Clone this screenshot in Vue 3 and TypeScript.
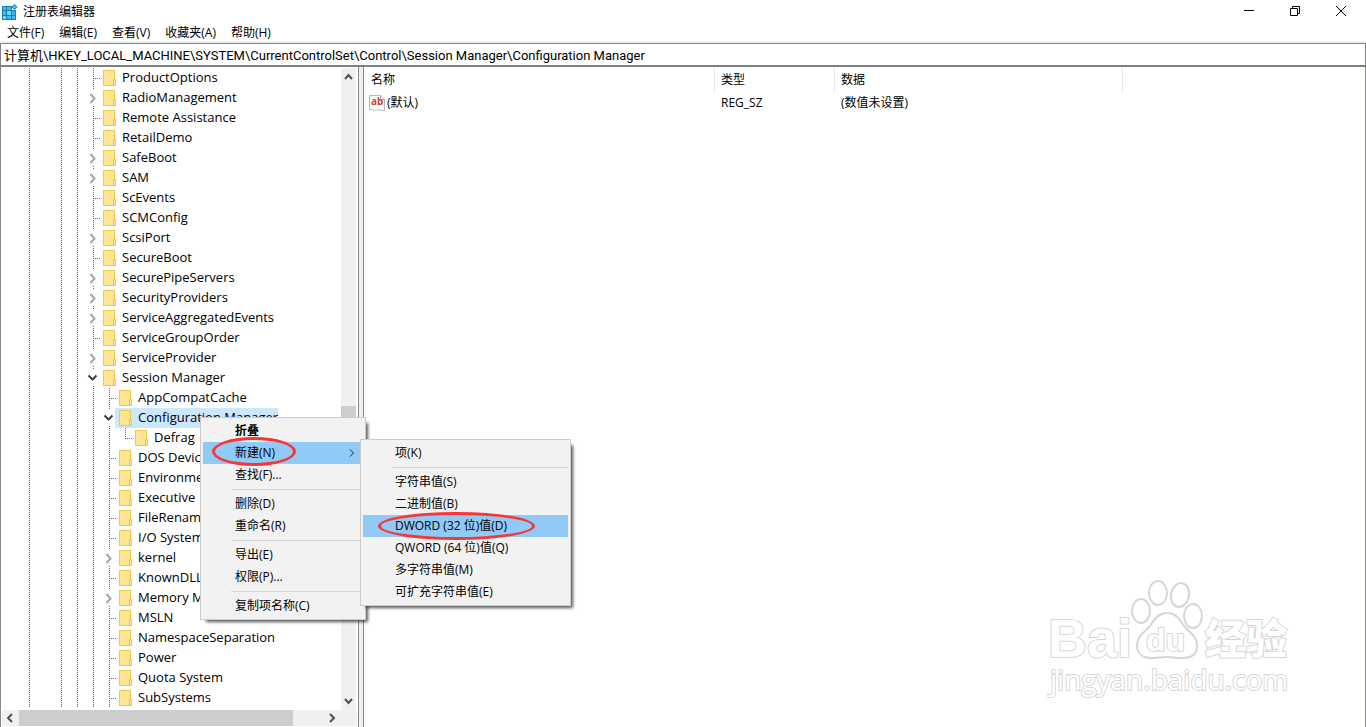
<script setup lang="ts">
import { ref } from 'vue'

type Guide = 'line' | 'blank' | 'tee' | 'end' | 'closed' | 'open'

interface TreeNode {
  name: string
  depth: number
  state?: 'closed' | 'open'
  last?: boolean
}

interface MenuEntry {
  label?: string
  separator?: boolean
  bold?: boolean
  active?: boolean
  submenu?: boolean
}

const path = ref(
  '计算机\\HKEY_LOCAL_MACHINE\\SYSTEM\\CurrentControlSet\\Control\\Session Manager\\Configuration Manager',
)
const selected = ref('Configuration Manager')

const menus = ['文件(F)', '编辑(E)', '查看(V)', '收藏夹(A)', '帮助(H)']

const nodes: TreeNode[] = [
  { name: 'ProductOptions', depth: 0 },
  { name: 'RadioManagement', depth: 0, state: 'closed' },
  { name: 'Remote Assistance', depth: 0 },
  { name: 'RetailDemo', depth: 0 },
  { name: 'SafeBoot', depth: 0, state: 'closed' },
  { name: 'SAM', depth: 0, state: 'closed' },
  { name: 'ScEvents', depth: 0 },
  { name: 'SCMConfig', depth: 0 },
  { name: 'ScsiPort', depth: 0, state: 'closed' },
  { name: 'SecureBoot', depth: 0 },
  { name: 'SecurePipeServers', depth: 0, state: 'closed' },
  { name: 'SecurityProviders', depth: 0, state: 'closed' },
  { name: 'ServiceAggregatedEvents', depth: 0, state: 'closed' },
  { name: 'ServiceGroupOrder', depth: 0 },
  { name: 'ServiceProvider', depth: 0, state: 'closed' },
  { name: 'Session Manager', depth: 0, state: 'open' },
  { name: 'AppCompatCache', depth: 1 },
  { name: 'Configuration Manager', depth: 1, state: 'open' },
  { name: 'Defrag', depth: 2, last: true },
  { name: 'DOS Devices', depth: 1 },
  { name: 'Environment', depth: 1 },
  { name: 'Executive', depth: 1 },
  { name: 'FileRenameOperations', depth: 1 },
  { name: 'I/O System', depth: 1 },
  { name: 'kernel', depth: 1, state: 'closed' },
  { name: 'KnownDLLs', depth: 1 },
  { name: 'Memory Management', depth: 1, state: 'closed' },
  { name: 'MSLN', depth: 1 },
  { name: 'NamespaceSeparation', depth: 1 },
  { name: 'Power', depth: 1 },
  { name: 'Quota System', depth: 1 },
  { name: 'SubSystems', depth: 1 },
]

function guides(node: TreeNode): Guide[] {
  const cells: Guide[] = ['line', 'blank', 'line', 'line']
  for (let i = 0; i < node.depth; i++) cells.push('line')
  cells.push(node.state ?? (node.last ? 'end' : 'tee'))
  return cells
}

const contextMenu: MenuEntry[] = [
  { label: '折叠', bold: true },
  { label: '新建(N)', active: true, submenu: true },
  { label: '查找(F)...' },
  { separator: true },
  { label: '删除(D)' },
  { label: '重命名(R)' },
  { separator: true },
  { label: '导出(E)' },
  { label: '权限(P)...' },
  { separator: true },
  { label: '复制项名称(C)' },
]

const newMenu: MenuEntry[] = [
  { label: '项(K)' },
  { separator: true },
  { label: '字符串值(S)' },
  { label: '二进制值(B)' },
  { label: 'DWORD (32 位)值(D)', active: true },
  { label: 'QWORD (64 位)值(Q)' },
  { label: '多字符串值(M)' },
  { label: '可扩充字符串值(E)' },
]
</script>

<template>
  <div class="window">
    <header class="titlebar">
      <svg class="app-icon" width="16" height="16" viewBox="0 0 16 16" aria-hidden="true">
        <path d="M0 2h10v4h4v10H0z" fill="#1b7fb0" />
        <path d="M1 3h3v3H1zM5 3h4v3H5zM1 7h3v4H1zM5 7h4v4H5zM10 7h3v4h-3zM1 12h3v3H1zM5 12h4v3H5zM10 12h3v3h-3z" fill="#3db8ea" />
        <path d="M5 7h4v4H5zM1 12h3v3H1z" fill="#75d5f5" />
        <path d="M12.500 0l3 3-3 3-3-3z" fill="#1787bd" />
        <path d="M12.500 1.500l1.500 1.500-1.500 1.500-1.500-1.500z" fill="#7bd3f2" />
      </svg>
      <h1 class="title">注册表编辑器</h1>
      <div class="window-buttons">
        <button type="button" aria-label="最小化">
          <svg width="10" height="10" viewBox="0 0 10 10"><path d="M0 4.500h10" /></svg>
        </button>
        <button type="button" aria-label="还原">
          <svg width="10" height="10" viewBox="0 0 10 10"><path d="M.5 2.500h7v7h-7zM2.500 2.500v-2h7v7h-2" /></svg>
        </button>
        <button type="button" aria-label="关闭">
          <svg width="10" height="10" viewBox="0 0 10 10"><path d="M0 0l10 10M10 0L0 10" /></svg>
        </button>
      </div>
    </header>

    <nav class="menubar">
      <button v-for="m in menus" :key="m" type="button">{{ m }}</button>
    </nav>

    <div class="address">
      <input v-model="path" type="text" aria-label="地址" />
    </div>

    <main class="panes">
      <section class="tree-pane">
        <div class="tree-main">
          <ul class="tree">
            <li v-for="node in nodes" :key="node.name" class="row">
              <template v-for="(g, i) in guides(node)" :key="i">
                <button
                  v-if="g === 'closed' || g === 'open'"
                  type="button"
                  class="cell expander"
                  :class="g"
                  :aria-label="(g === 'open' ? '折叠 ' : '展开 ') + node.name"
                >
                  <svg width="16" height="20" viewBox="0 0 16 20">
                    <path v-if="g === 'closed'" d="M5.500 6l4 4.500-4 4.500" />
                    <path v-else d="M3.500 7.500l4 4 4-4" />
                  </svg>
                </button>
                <span v-else class="cell" :class="g"></span>
              </template>
              <button
                type="button"
                class="node"
                :class="{ selected: node.name === selected }"
                @click="selected = node.name"
              >
                <svg width="13" height="16" viewBox="0 0 13 16" aria-hidden="true">
                  <rect x=".5" y=".5" width="11" height="15" fill="#ffe592" stroke="#f0c94c" />
                  <path d="M10.500 9.500h2v6h-2z" fill="#ffe592" stroke="#ecc443" />
                </svg>
                <span>{{ node.name }}</span>
              </button>
            </li>
          </ul>
          <div class="vscroll">
            <svg class="arrow" width="15" height="17" viewBox="0 0 15 17"><path d="M4 11l3.500-4 3.500 4" /></svg>
            <div class="track">
              <span class="before"></span>
              <span class="thumb"></span>
              <span class="after"></span>
            </div>
            <svg class="arrow" width="15" height="17" viewBox="0 0 15 17"><path d="M4 6l3.500 4L11 6" /></svg>
          </div>
        </div>
        <div class="hscroll">
          <svg class="arrow" width="17" height="16" viewBox="0 0 17 16"><path d="M10 4L6 8l4 4" /></svg>
          <div class="track">
            <span class="thumb"></span>
            <span class="after"></span>
          </div>
          <svg class="arrow" width="17" height="16" viewBox="0 0 17 16"><path d="M7 4l4 4-4 4" /></svg>
          <span class="corner"></span>
        </div>
      </section>

      <section class="list-pane">
        <table>
          <thead>
            <tr>
              <th class="c-name">名称</th>
              <th class="c-type">类型</th>
              <th class="c-data">数据</th>
              <th></th>
            </tr>
          </thead>
          <tbody>
            <tr>
              <td class="value">
                <svg width="16" height="16" viewBox="0 0 16 16" aria-hidden="true">
                  <path d="M.5.5h11l4 4v11h-3l-1-1-2 1-2-1-2 1-2-1-3 0z" fill="#fff" stroke="#b9b9b9" />
                  <path d="M11.500.5v4h4" fill="none" stroke="#b9b9b9" />
                  <text x="2" y="10">ab</text>
                </svg>
                <span>(默认)</span>
              </td>
              <td>REG_SZ</td>
              <td>(数值未设置)</td>
              <td></td>
            </tr>
          </tbody>
        </table>
      </section>
    </main>

    <div class="menu context" role="menu">
      <template v-for="(e, i) in contextMenu" :key="i">
        <hr v-if="e.separator" />
        <button v-else type="button" role="menuitem" :class="{ active: e.active, bold: e.bold }">
          <span>{{ e.label }}</span>
          <svg v-if="e.submenu" width="6" height="8" viewBox="0 0 6 8"><path d="M1 .5L4.500 4 1 7.500" /></svg>
        </button>
      </template>
    </div>

    <div class="menu submenu" role="menu">
      <template v-for="(e, i) in newMenu" :key="i">
        <hr v-if="e.separator" />
        <button v-else type="button" role="menuitem" :class="{ active: e.active }">
          <span>{{ e.label }}</span>
        </button>
      </template>
    </div>

    <span class="ring ring-new"></span>
    <span class="ring ring-dword"></span>

    <svg class="watermark" width="260" height="130" viewBox="0 0 260 130" aria-hidden="true">
      <g class="mark">
        <text class="latin" x="4" y="76">Bai</text>
        <ellipse cx="97" cy="30" rx="9" ry="12" />
        <ellipse cx="114" cy="12" rx="9" ry="12" />
        <ellipse cx="136" cy="14" rx="9" ry="12" transform="rotate(12 136 14)" />
        <ellipse cx="149" cy="35" rx="9" ry="12" />
        <path d="M123 32c10 0 13 8 18 14s12 9 12 19c0 9-7 12-15 12-6 0-10-1-15-1s-10 1-15 1c-9 0-15-4-15-12 0-10 7-13 12-19s8-14 18-14z" />
        <text class="du" x="102" y="70">du</text>
        <text class="cjk" x="161" y="73">经验</text>
        <text class="url" x="6" y="109">jingyan.baidu.com</text>
      </g>
    </svg>
  </div>
</template>

<style>
body {
  margin: 0;
  overflow: hidden;
}
</style>

<style scoped>
.window {
  position: relative;
  display: flex;
  flex-direction: column;
  height: 100vh;
  overflow: hidden;
  background: #fff;
  color: #000;
  font: 12px/20px "Open Sans", "Noto Sans CJK SC", sans-serif;
}
button {
  margin: 0;
  padding: 0;
  border: 0;
  background: none;
  color: inherit;
  font: inherit;
  white-space: nowrap;
}
svg {
  display: block;
  flex: none;
}
.titlebar {
  display: flex;
  align-items: center;
  height: 23px;
  padding: 0 2px;
}
.title {
  flex: 1;
  margin: 0 0 0 5px;
  font-size: 12px;
  font-weight: 400;
}
.window-buttons {
  display: flex;
  align-self: flex-start;
}
.window-buttons button {
  display: grid;
  place-items: center;
  width: 46px;
  height: 21px;
}
.window-buttons path {
  fill: none;
  stroke: #000;
}
.menubar {
  display: flex;
  gap: 15px;
  height: 18px;
  padding: 0 7px;
  border-bottom: 2px solid #f0f0f0;
}
.menubar button {
  line-height: 20px;
}
.address {
  border: 1px solid #828282;
  border-bottom: 2px solid #7d8087;
}
.address input {
  display: block;
  box-sizing: border-box;
  width: 100%;
  height: 21px;
  padding: 0 3px;
  border: 0;
  outline: 0;
  background: #fff;
  font: 13px/20px Roboto, "Noto Sans CJK SC", sans-serif;
}
.panes {
  display: flex;
  flex: 1;
  gap: 4px;
  min-height: 0;
  background: #f0f0f0;
}
.tree-pane {
  display: flex;
  flex: 0 0 357px;
  flex-direction: column;
  border: solid #828790;
  border-width: 0 1px;
  background: #fff;
}
.tree-main {
  display: flex;
  flex: 1;
  min-height: 0;
  padding: 1px 2px 0 0;
}
.tree {
  flex: 1;
  margin: 0;
  padding: 0 0 0 20px;
  overflow: hidden;
  list-style: none;
  font-family: "Open Sans", sans-serif;
  font-size: 13px;
}
.row {
  display: flex;
  height: 20px;
}
.cell {
  flex: none;
  width: 16px;
  height: 20px;
  background-repeat: no-repeat;
}
.line,
.tee,
.end,
.closed,
.open {
  --v: repeating-linear-gradient(#666 0 1px, transparent 1px 2px);
  --h: repeating-linear-gradient(90deg, #666 0 1px, transparent 1px 2px);
}
.line {
  background-image: var(--v);
  background-position: 8px 0;
  background-size: 1px 20px;
}
.tee {
  background-image: var(--v), var(--h);
  background-position: 8px 0, 8px 10px;
  background-size: 1px 20px, 7px 1px;
}
.end {
  background-image: var(--v), var(--h);
  background-position: 8px 0, 8px 10px;
  background-size: 1px 10px, 7px 1px;
}
.closed,
.open {
  background-image: var(--v), var(--v);
  background-position: 8px 0, 8px 18px;
  background-size: 1px 2px, 1px 2px;
}
.expander path {
  fill: none;
  stroke: #a6a6a6;
  stroke-width: 2;
}
.expander.open path {
  stroke: #404040;
}
.node {
  display: flex;
  gap: 6px;
  align-items: center;
  height: 20px;
  margin-left: -2px;
  padding: 0 0 0 4px;
}
.node span {
  line-height: 18px;
  padding-bottom: 2px;
}
.node.selected {
  background: #cce8ff;
}
.vscroll {
  display: flex;
  flex: 0 0 15px;
  flex-direction: column;
  background: #f0f0f0;
}
.arrow path {
  fill: none;
  stroke: #505050;
  stroke-width: 2;
}
.track {
  display: flex;
  flex: 1;
}
.vscroll .track {
  flex-direction: column;
}
.thumb {
  background: #cdcdcd;
}
.before {
  flex: 320;
}
.vscroll .thumb {
  flex: 27;
}
.vscroll .after {
  flex: 260;
}
.hscroll {
  display: flex;
  height: 16px;
  margin: 0 1px 1px;
  background: #f0f0f0;
}
.hscroll .thumb {
  flex: 274;
}
.hscroll .after {
  flex: 30;
}
.corner {
  width: 17px;
}
.list-pane {
  flex: 1;
  border: solid #828790;
  border-width: 0 1px;
  background: #fff;
}
table {
  width: 100%;
  border-collapse: collapse;
  table-layout: fixed;
}
th {
  box-sizing: border-box;
  height: 25px;
  padding: 1px 6px 0;
  background: linear-gradient(#e5e5e5, #e5e5e5) right bottom / 1px 24px no-repeat;
  font-weight: 400;
  text-align: left;
}
th:first-child {
  padding-left: 7px;
}
th:last-child {
  background: none;
}
.c-name {
  width: 351px;
}
.c-type {
  width: 120px;
}
.c-data {
  width: 288px;
}
td {
  height: 20px;
  padding: 1px 6px;
}
.value {
  padding: 0 5px;
}
.value svg,
.value span {
  display: inline-block;
  vertical-align: middle;
}
.value span {
  margin-left: 2px;
}
.value text {
  fill: #d9431e;
  font: bold 10px "Noto Sans", sans-serif;
}
.menu {
  position: absolute;
  display: flex;
  flex-direction: column;
  box-sizing: border-box;
  padding: 2px;
  border: 1px solid #ccc;
  background: #f2f2f2;
  box-shadow: 4px 4px 3px -2px rgba(0, 0, 0, 0.65);
}
.context {
  top: 417px;
  left: 200px;
  width: 166px;
}
.submenu {
  top: 439px;
  left: 360px;
  width: 211px;
}
.menu button {
  display: flex;
  align-items: center;
  justify-content: space-between;
  height: 22px;
  padding: 0 8px 0 32px;
  text-align: left;
}
.menu button.active {
  background: #91c9f7;
}
.menu button.bold {
  font-weight: 700;
}
.menu button path {
  fill: none;
  stroke: #222;
}
.menu hr {
  box-sizing: border-box;
  width: auto;
  height: 1px;
  margin: 3px 0 3px 28px;
  border: 0;
  background: #d7d7d7;
}
.ring {
  position: absolute;
  box-sizing: border-box;
  border: 3px solid #f93636;
  border-radius: 50%;
  pointer-events: none;
}
.ring-new {
  top: 437px;
  left: 212px;
  width: 84px;
  height: 29px;
}
.ring-dword {
  top: 512px;
  left: 378px;
  width: 157px;
  height: 28px;
}
.watermark {
  position: absolute;
  right: 62px;
  bottom: 16px;
  overflow: visible;
}
.mark {
  fill: #fff;
  stroke: #d6d6d6;
  stroke-width: 2;
}
.mark text {
  paint-order: stroke;
}
.latin {
  font: bold 54px "Liberation Sans", sans-serif;
}
.du {
  font: bold 32px "Liberation Sans", sans-serif;
}
.cjk {
  font: 900 41px "Noto Sans CJK SC", sans-serif;
}
.url {
  font: 28px "Open Sans", sans-serif;
}
</style>
